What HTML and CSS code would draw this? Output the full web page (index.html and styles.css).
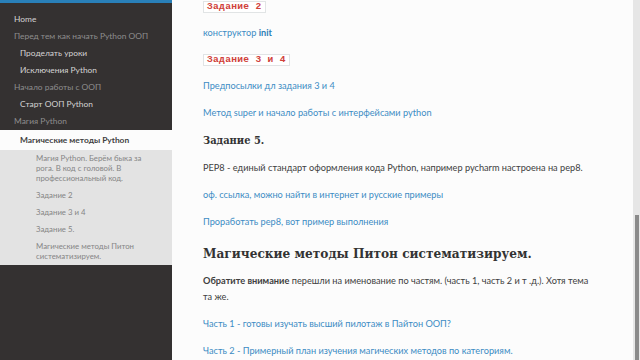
FILE: index.html
```html
<!DOCTYPE html>
<html lang="ru">
<head>
<meta charset="utf-8">
<title>Магические методы Python</title>
<link rel="stylesheet" href="styles.css">
</head>
<body>
<div class="page">
  <nav class="side">
    <div class="side-top"></div>
    <ul class="menu">
      <li class="item l1"><a href="#">Home</a></li>
      <li class="item cap">Перед тем как начать Python ООП</li>
      <li class="item l2"><a href="#">Проделать уроки</a></li>
      <li class="item l2"><a href="#">Исключения Python</a></li>
      <li class="item cap">Начало работы с ООП</li>
      <li class="item l2"><a href="#">Старт ООП Python</a></li>
      <li class="item cap">Магия Python</li>
      <li class="item current"><a href="#">Магические методы Python</a></li>
      <li class="subwrap">
        <ul class="sub">
          <li><a href="#">Магия Python. Берём быка за рога. В код с головой. В профессиональный код.</a></li>
          <li><a href="#">Задание 2</a></li>
          <li><a href="#">Задание 3 и 4</a></li>
          <li><a href="#">Задание 5.</a></li>
          <li><a href="#">Магические методы Питон систематизируем.</a></li>
        </ul>
      </li>
    </ul>
  </nav>
  <main class="content">
    <div class="doc">
      <p class="codep"><code class="lit">Задание 2</code></p>
      <p><a href="#">конструктор <b>init</b></a></p>
      <p class="codep"><code class="lit">Задание 3 и 4</code></p>
      <p><a href="#">Предпосылки дл задания 3 и 4</a></p>
      <p><a href="#">Метод super и начало работы с интерфейсами python</a></p>
      <h3 class="h-small">Задание 5.</h3>
      <p>PEP8 - единый стандарт оформления кода Python, например pycharm настроена на pep8.</p>
      <p><a href="#">оф. ссылка, можно найти в интернет и русские примеры</a></p>
      <p><a href="#">Проработать pep8, вот пример выполнения</a></p>
      <h2 class="h-big">Магические методы Питон систематизируем.</h2>
      <p><b>Обратите внимание</b> перешли на именование по частям. (часть 1, часть 2 и т .д.). Хотя тема та же.</p>
      <p><a href="#">Часть 1 - готовы изучать высший пилотаж в Пайтон ООП?</a></p>
      <p><a href="#">Часть 2 - Примерный план изучения магических методов по категориям.</a></p>
    </div>
  </main>
  <div class="scrollbar"><div class="thumb"></div></div>
</div>
</body>
</html>
```

FILE: styles.css
```css
* { box-sizing: border-box; }
html, body { margin: 0; padding: 0; height: 100%; overflow: hidden; }
body { font-family: Lato, "Noto Sans", sans-serif; color: #404040; background: #fcfcfc; }

.page { display: flex; height: 360px; width: 640px; }

.side { width: 172px; flex: none; background: #343131; display: flex; flex-direction: column; }
.side-top { height: 3px; background: #2980b9; }
.menu { list-style: none; margin: 0; padding: 8px 0 0; }
.item { font-size: 8.4px; line-height: 17px; padding-left: 14px; white-space: nowrap; }
.item a { color: #d4d4d4; text-decoration: none; }
.cap { color: #8e8e8e; }
.l2 { padding-left: 20px; }
.current { background: #fcfcfc; padding-left: 20px; line-height: 20px; }
.current a { color: #404040; font-weight: bold; }
.subwrap { background: #e3e3e3; padding: 3px 22px 4px 36px; }
.sub { list-style: none; margin: 0; padding: 0; display: flex; flex-direction: column; gap: 7px; }
.sub li { font-size: 7.8px; line-height: 10px; }
.sub a { color: #858585; text-decoration: none; }

.content { flex: 1; padding-left: 31px; }
.doc { width: 392px; margin-top: -1px; font-size: 9.2px; }
.doc p { margin: 0 0 11px; line-height: 16px; }
.doc .codep { height: 16px; display: flex; align-items: center; margin-bottom: 10px; }
.doc a { color: #3d8cc4; text-decoration: none; }
.doc a b { color: #2f7fb6; }
.lit { display: block; font-family: "Liberation Mono", monospace; font-size: 9.6px; line-height: 10px; font-weight: bold; color: #d0413a; background: #fff; border: 1px solid #e1e4e5; padding: 0 3px; letter-spacing: 0.3px; }
.h-small { font-family: "DejaVu Serif", serif; font-stretch: condensed; font-size: 11px; line-height: 18px; margin: 0 0 10px; color: #333; }
.h-big { font-family: "DejaVu Serif", serif; font-stretch: condensed; font-size: 13.5px; line-height: 24px; margin: 0 0 8px; color: #333; }

.scrollbar { width: 7px; flex: none; background: #e6e6e6; position: relative; }
.thumb { position: absolute; left: 2px; right: 1px; top: 215px; bottom: 0; background: #8a8a8a; }
```
